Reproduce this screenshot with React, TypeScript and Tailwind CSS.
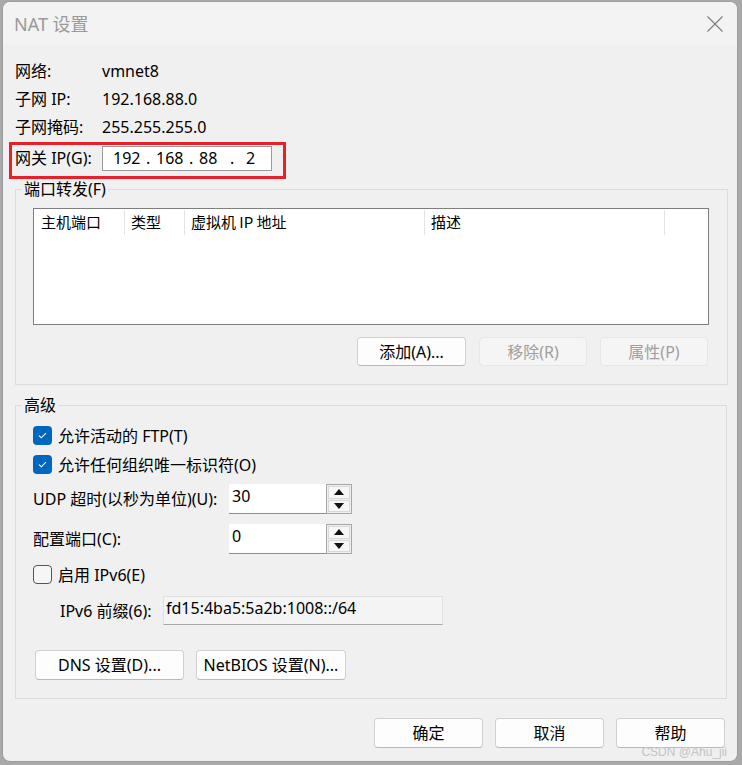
import React from "react";

function CheckBox({ checked }: { checked: boolean }) {
  if (checked) {
    return (
      <div className="w-[19px] h-[19px] rounded-[4px] bg-[#0067c0] flex items-center justify-center shrink-0">
        <svg width="11" height="9" viewBox="0 0 11 9">
          <path d="M2 4.6 L4.3 6.8 L9 2.2" fill="none" stroke="white" strokeWidth="1.1" />
        </svg>
      </div>
    );
  }
  return <div className="w-[19px] h-[19px] rounded-[4px] border border-[#555] bg-[#f6f6f6] shrink-0" />;
}

function Arrow({ up }: { up: boolean }) {
  return (
    <svg width="10" height="6" viewBox="0 0 10 6">
      {up ? <path d="M0 6 L5 0 L10 6 Z" fill="#111" /> : <path d="M0 0 L10 0 L5 6 Z" fill="#111" />}
    </svg>
  );
}

function SpinBox({ value }: { value: string }) {
  return (
    <div className="flex h-[30px]">
      <div className="w-[97px] h-full bg-white border-b border-[#8f8f8f] pl-[3px] text-[16px] leading-[24px] text-black">
        {value}
      </div>
      <div className="w-[26px] h-full border border-[#a6a6a6] bg-[#f0f0f0] flex flex-col p-[1px] gap-[1px]">
        <div className="flex-1 border border-[#d8d8d8] bg-[#f7f7f7] flex items-center justify-center">
          <Arrow up={true} />
        </div>
        <div className="flex-1 border border-[#d8d8d8] bg-[#f7f7f7] flex items-center justify-center">
          <Arrow up={false} />
        </div>
      </div>
    </div>
  );
}

function Btn({ label, w, disabled }: { label: string; w: string; disabled?: boolean }) {
  return (
    <div
      className={
        disabled
          ? `${w} h-[29px] rounded-[4px] border border-[#e6e6e6] bg-[#f5f5f5] text-[#9f9f9f] flex items-center justify-center text-[16px]`
          : `${w} h-[29px] rounded-[4px] border border-[#d0d0d0] border-b-[#b9b9b9] bg-[#fdfdfd] text-black flex items-center justify-center text-[16px]`
      }
    >
      {label}
    </div>
  );
}

export default function App() {
  return (
    <div className="w-[742px] h-[765px] bg-[#a9a9a9] pl-[2px] pt-[1px] overflow-hidden font-['Noto_Sans','Noto_Sans_CJK_SC',sans-serif] text-black">
      <div className="relative w-[736px] h-[761px] rounded-[8px] border border-[#9c9c9c] bg-[#f0f0f0] flex flex-col overflow-hidden">
        {/* title bar */}
        <div className="h-[43px] bg-[#f3f3f3] flex items-center justify-between pl-[11px] pr-[14px] shrink-0">
          <span className="text-[18px] text-[#9a9a9a] leading-none">NAT 设置</span>
          <svg width="16" height="16" viewBox="0 0 16 16">
            <path d="M0.5 0.5 L15.5 15.5 M15.5 0.5 L0.5 15.5" stroke="#7a7a7a" strokeWidth="1.1" />
          </svg>
        </div>

        {/* info rows */}
        <div className="mt-[12px] pl-[12px] flex flex-col text-[16px]">
          <div className="h-[28px] flex items-center">
            <span className="w-[87px]">网络:</span>
            <span>vmnet8</span>
          </div>
          <div className="h-[28px] flex items-center">
            <span className="w-[87px]">子网 IP:</span>
            <span>192.168.88.0</span>
          </div>
          <div className="h-[28px] flex items-center">
            <span className="w-[87px]">子网掩码:</span>
            <span>255.255.255.0</span>
          </div>
        </div>

        {/* gateway with red highlight */}
        <div className="mt-[1px] ml-[6px] w-[277px] h-[37px] border-[3px] border-[#e8202a] flex items-start">
          <div className="h-[26px] flex items-center pl-[3px] text-[16px]">
            <span className="w-[87px]">网关 IP(G):</span>
            <div className="w-[170px] h-[25px] bg-white border border-[#9a9a9a] flex items-center text-[16px]">
              <span className="ml-[10px] w-[25px]">192</span>
              <span className="ml-[8px] w-[10px]">.</span>
              <span className="w-[25px]">168</span>
              <span className="ml-[8px] w-[10px]">.</span>
              <span className="w-[18px]">88</span>
              <span className="ml-[13px] w-[10px]">.</span>
              <span className="ml-[6px]">2</span>
            </div>
          </div>
        </div>

        {/* port forwarding group */}
        <fieldset className="ml-[12px] w-[712px] border border-[#dcdcdc] p-0 m-0">
          <legend className="ml-[6px] px-[2px] text-[16px] leading-[20px]">端口转发(F)</legend>
          <div className="pl-[17px] pr-[18px] pt-[9px] pb-[18px] flex flex-col">
            <div className="w-[676px] h-[117px] bg-white border border-[#7f7f7f] flex items-start text-[15px] font-['Noto_Sans_CJK_SC',sans-serif]">
              <div className="w-[91px] h-[25px] mt-[1px] border-r border-[#e3e3e3] pl-[7px] flex items-center">主机端口</div>
              <div className="w-[60px] h-[25px] mt-[1px] border-r border-[#e3e3e3] pl-[6px] flex items-center">类型</div>
              <div className="w-[240px] h-[25px] mt-[1px] border-r border-[#e3e3e3] pl-[6px] flex items-center">虚拟机 IP 地址</div>
              <div className="w-[240px] h-[25px] mt-[1px] border-r border-[#e3e3e3] pl-[6px] flex items-center">描述</div>
            </div>
            <div className="mt-[12px] flex justify-end gap-[13px] pr-[1px]">
              <Btn label="添加(A)..." w="w-[109px]" />
              <Btn label="移除(R)" w="w-[108px]" disabled />
              <Btn label="属性(P)" w="w-[108px]" disabled />
            </div>
          </div>
        </fieldset>

        {/* advanced group */}
        <fieldset className="mt-[10px] ml-[12px] w-[712px] border border-[#dcdcdc] p-0 m-0">
          <legend className="ml-[6px] px-[2px] text-[16px] leading-[20px]">高级</legend>
          <div className="pl-[17px] pt-[6px] pb-[18px] flex flex-col text-[16px]">
            <div className="h-[29px] flex items-center gap-[6px]">
              <CheckBox checked={true} />
              <span>允许活动的 FTP(T)</span>
            </div>
            <div className="h-[29px] flex items-center gap-[6px]">
              <CheckBox checked={true} />
              <span>允许任何组织唯一标识符(O)</span>
            </div>
            <div className="mt-[5px] h-[30px] flex items-center">
              <span className="w-[196px]">UDP 超时(以秒为单位)(U):</span>
              <SpinBox value="30" />
            </div>
            <div className="mt-[10px] h-[30px] flex items-center">
              <span className="w-[196px]">配置端口(C):</span>
              <SpinBox value="0" />
            </div>
            <div className="mt-[6px] h-[29px] flex items-center gap-[6px]">
              <CheckBox checked={false} />
              <span>启用 IPv6(E)</span>
            </div>
            <div className="mt-[7px] h-[29px] flex items-center pl-[27px]">
              <span className="w-[103px]">IPv6 前缀(6):</span>
              <div className="w-[280px] h-[29px] bg-[#f4f4f4] border border-[#e0e0e0] border-b-[#a8a8a8] pl-[2px] leading-[22px]">
                fd15:4ba5:5a2b:1008::/64
              </div>
            </div>
            <div className="mt-[25px] flex gap-[12px] pl-[2px]">
              <Btn label="DNS 设置(D)..." w="w-[149px] h-[30px]" />
              <Btn label="NetBIOS 设置(N)..." w="w-[150px] h-[30px]" />
            </div>
          </div>
        </fieldset>

        {/* bottom buttons */}
        <div className="mt-[19px] flex justify-end gap-[12px] pr-[12px]">
          <Btn label="确定" w="w-[109px] h-[30px]" />
          <Btn label="取消" w="w-[109px] h-[30px]" />
          <Btn label="帮助" w="w-[109px] h-[30px]" />
        </div>

        <span className="absolute right-[10px] bottom-[3px] text-[12px] leading-none text-[#c4c4c4] font-['Liberation_Sans',sans-serif]">
          CSDN @Ahu_jii
        </span>
      </div>
    </div>
  );
}
